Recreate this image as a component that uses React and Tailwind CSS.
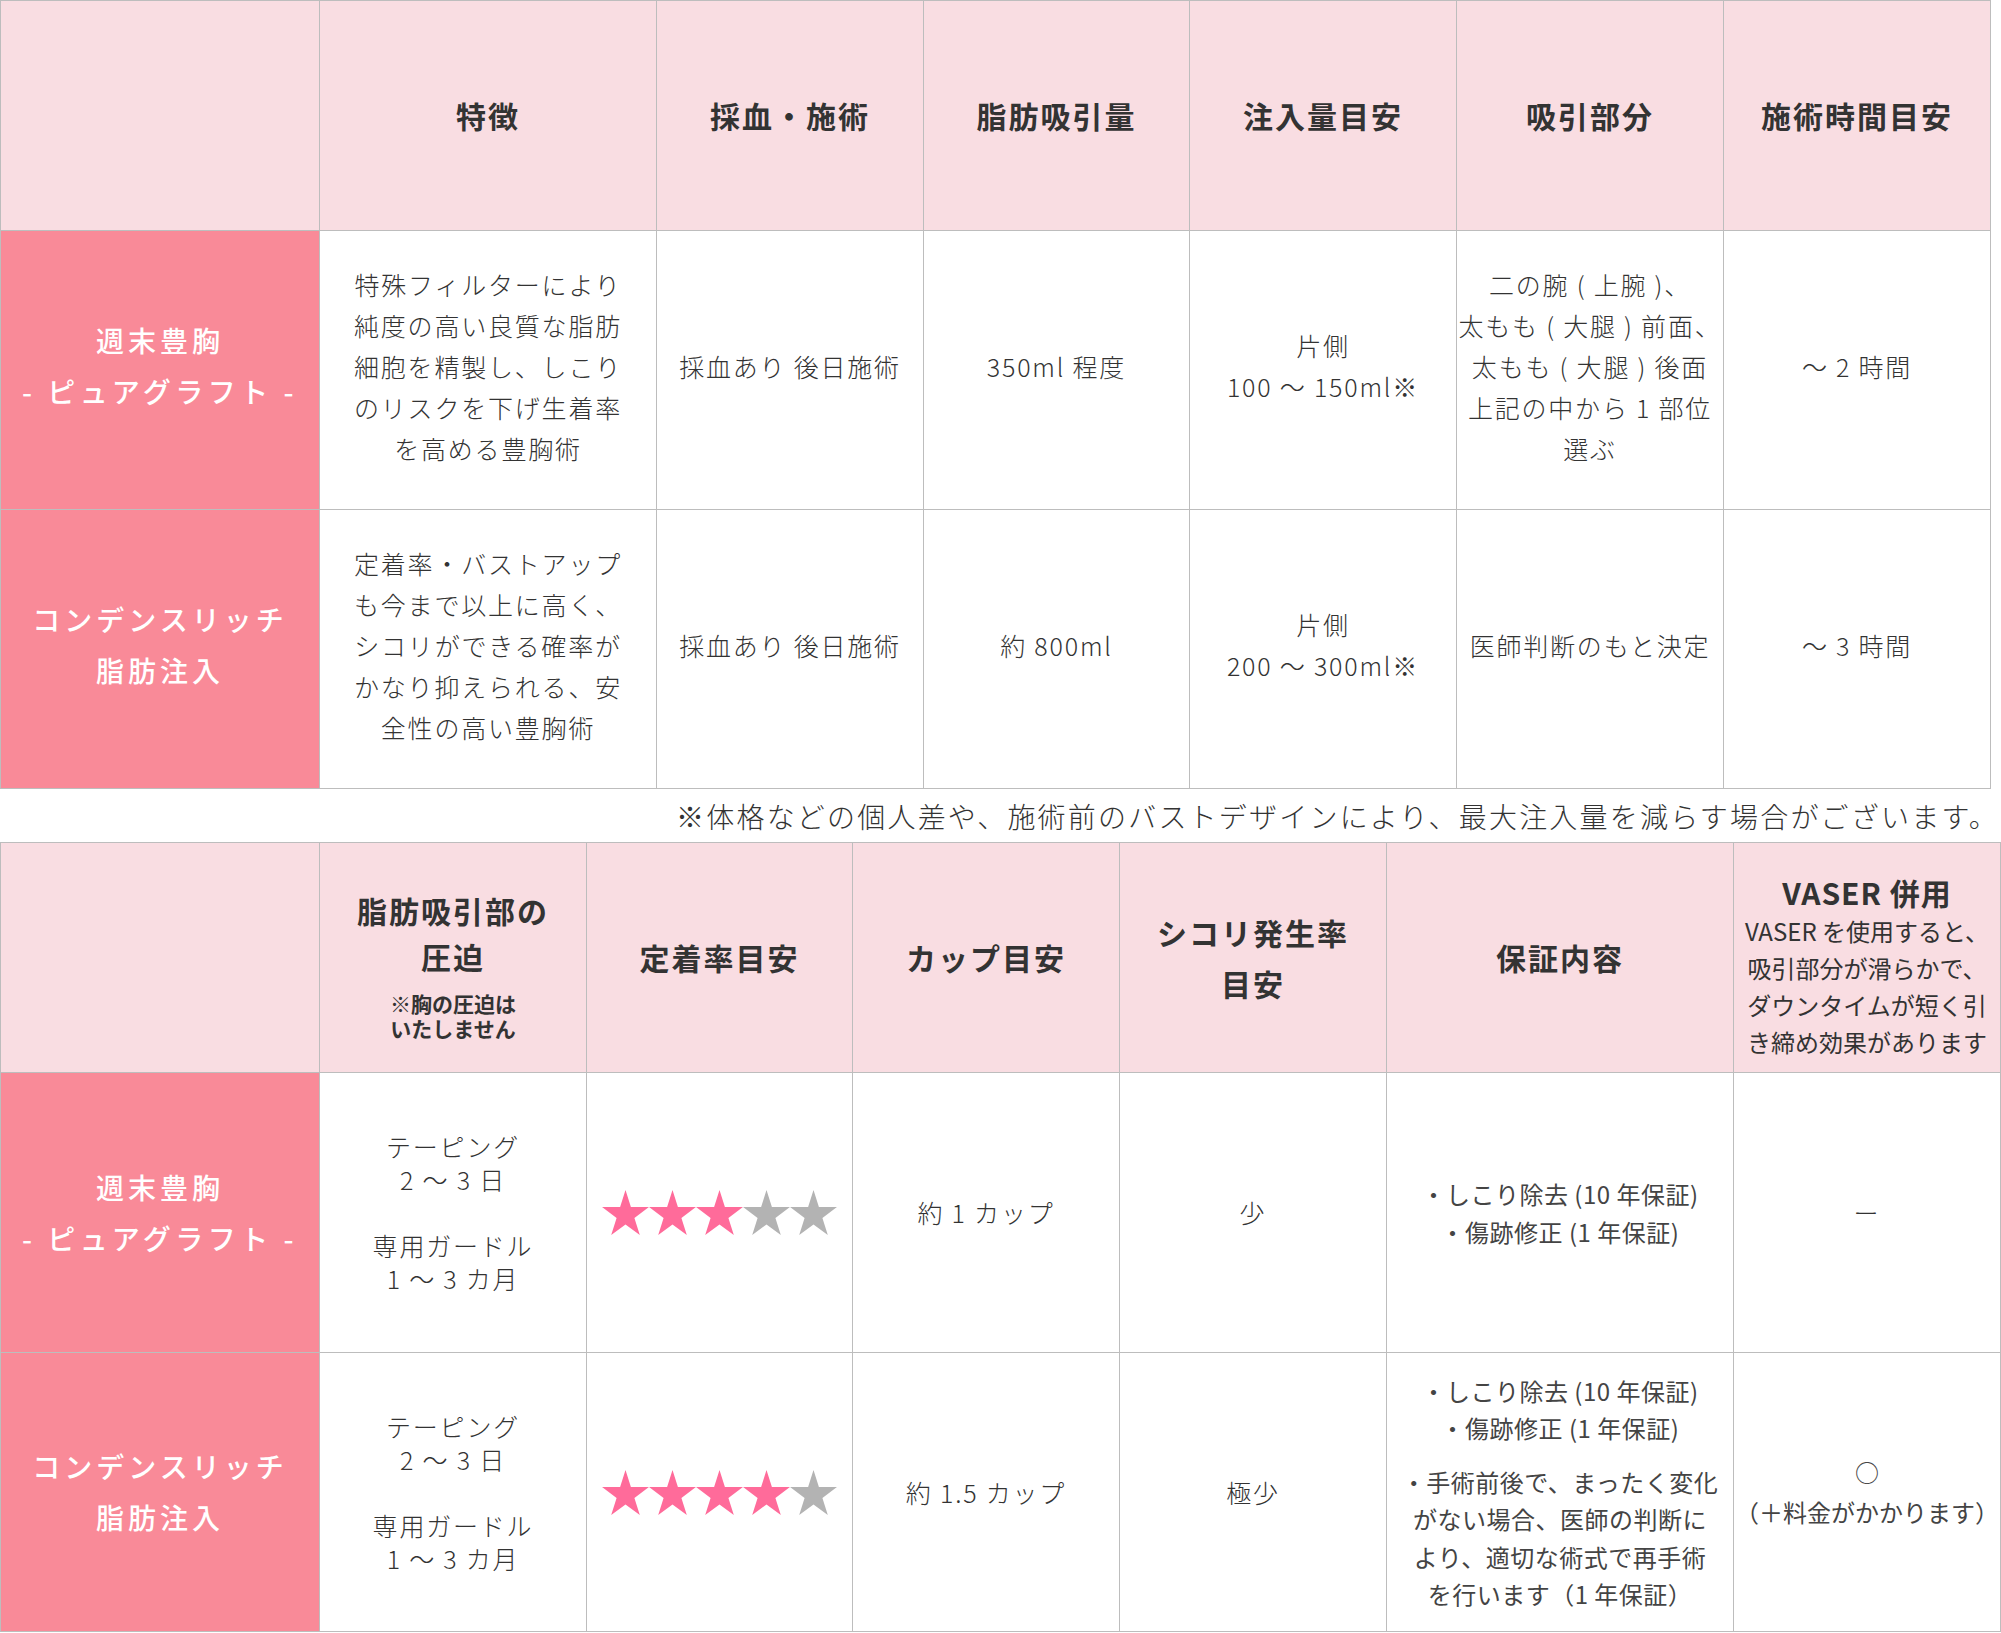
import React from 'react'

const font = "font-['Noto_Sans_CJK_JP','Noto_Sans',sans-serif]"

function Cell({ className = '', children }) {
  return (
    <div className={`flex flex-col items-center justify-center text-center ${className}`}>
      {children}
    </div>
  )
}

function Head({ children, className = '' }) {
  return (
    <Cell className={`bg-[#f9dde2] text-[30px] font-bold text-[#333] ${className}`}>
      {children}
    </Cell>
  )
}

function Label({ lines, className = '' }) {
  return (
    <Cell className={`bg-[#f98a98] text-[28px] font-medium text-white leading-[51px] ${className}`}>
      {lines.map((l, i) => (
        <div key={i} className={l.startsWith('-') ? 'tracking-[4.5px]' : 'tracking-[4px]'}>{l}</div>
      ))}
    </Cell>
  )
}

// body text: light weight, wide spacing
function Body({ lines, lh = 'leading-[41px]', className = '' }) {
  return (
    <Cell className={`bg-white text-[25px] font-light tracking-[1.8px] text-[#333] ${lh} ${className}`}>
      {lines.map((l, i) => (
        <div key={i} className="whitespace-pre">{l === '' ? '\u00a0' : l}</div>
      ))}
    </Cell>
  )
}

function Star({ on }) {
  return (
    <svg viewBox="0 0 100 96" className="h-[45px] w-[47px]">
      <polygon
        points="50,0 61.5,36.5 100,36.5 69,59.5 80.5,96 50,73.5 19.5,96 31,59.5 0,36.5 38.5,36.5"
        fill={on ? '#ff6b9a' : '#b3b3b3'}
      />
    </svg>
  )
}

function Stars({ count }) {
  return (
    <Cell className="bg-white">
      <div className="flex">
        {[0, 1, 2, 3, 4].map((i) => (
          <Star key={i} on={i < count} />
        ))}
      </div>
    </Cell>
  )
}

function Guarantee({ blocks }) {
  return (
    <Cell className="bg-white text-[24px] tracking-[0.5px] text-[#444] leading-[37.5px] gap-[16px]">
      {blocks.map((b, i) => (
        <div key={i}>
          {b.map((l, j) => (
            <div key={j} className="whitespace-pre">{l}</div>
          ))}
        </div>
      ))}
    </Cell>
  )
}

const taping = ['テーピング', '2 ～ 3 日', '', '専用ガードル', '1 ～ 3 カ月']

export default function App() {
  return (
    <div className={`w-[2001px] h-[1633px] bg-white ${font}`}>
      {/* 上段：施術内容 */}
      <div className="grid w-[1991px] grid-cols-[318px_336px_266px_265px_266px_266px_266px] grid-rows-[229px_278px_278px] gap-px border border-[#bdbdbd] bg-[#bdbdbd] tracking-[2px]">
        <Head />
        <Head>特徴</Head>
        <Head>採血・施術</Head>
        <Head>脂肪吸引量</Head>
        <Head>注入量目安</Head>
        <Head>吸引部分</Head>
        <Head>施術時間目安</Head>

        <Label lines={['週末豊胸', '- ピュアグラフト -']} className="pb-[8px]" />
        <Body className="pb-[8px]" lines={['特殊フィルターにより', '純度の高い良質な脂肪', '細胞を精製し、しこり', 'のリスクを下げ生着率', 'を高める豊胸術']} />
        <Body className="pb-[8px]" lines={['採血あり 後日施術']} />
        <Body className="pb-[8px]" lines={['350ml 程度']} />
        <Body className="pb-[8px]" lines={['片側', '100 ～ 150ml※']} />
        <Body className="pb-[8px]" lines={['二の腕 ( 上腕 )、', '太もも ( 大腿 ) 前面、', '太もも ( 大腿 ) 後面', '上記の中から 1 部位', '選ぶ']} />
        <Body className="pb-[8px]" lines={['～ 2 時間']} />

        <Label lines={['コンデンスリッチ', '脂肪注入']} className="pb-[8px]" />
        <Body className="pb-[8px]" lines={['定着率・バストアップ', 'も今まで以上に高く、', 'シコリができる確率が', 'かなり抑えられる、安', '全性の高い豊胸術']} />
        <Body className="pb-[8px]" lines={['採血あり 後日施術']} />
        <Body className="pb-[8px]" lines={['約 800ml']} />
        <Body className="pb-[8px]" lines={['片側', '200 ～ 300ml※']} />
        <Body className="pb-[8px]" lines={['医師判断のもと決定']} />
        <Body className="pb-[8px]" lines={['～ 3 時間']} />
      </div>

      {/* 注記 */}
      <div className="flex h-[53px] items-center justify-end whitespace-nowrap pr-[2px] text-[28px] font-light tracking-[2.2px] text-[#333]">
        ※体格などの個人差や、施術前のバストデザインにより、最大注入量を減らす場合がございます。
      </div>

      {/* 下段：術後・保証 */}
      <div className="grid w-[2001px] grid-cols-[318px_266px_265px_266px_266px_346px_266px] grid-rows-[229px_279px_278px] gap-px border border-[#bdbdbd] bg-[#bdbdbd] tracking-[2px]">
        <Head />
        <Head className="pt-[12px]">
          <div className="leading-[46px]">脂肪吸引部の</div>
          <div className="leading-[46px]">圧迫</div>
          <div className="mt-[12px] text-[21px] tracking-normal leading-[25px]">
            <div>※胸の圧迫は</div>
            <div>いたしません</div>
          </div>
        </Head>
        <Head>定着率目安</Head>
        <Head>カップ目安</Head>
        <Head className="leading-[51px]">
          <div>シコリ発生率</div>
          <div>目安</div>
        </Head>
        <Head>保証内容</Head>
        <Head className="pt-[16px]">
          <div className="leading-[40px] tracking-[1px]">VASER 併用</div>
          <div className="whitespace-nowrap text-[24px] font-normal leading-[37px] tracking-normal text-[#333]">
            <div>VASER を使用すると、</div>
            <div>吸引部分が滑らかで、</div>
            <div>ダウンタイムが短く引</div>
            <div>き締め効果があります</div>
          </div>
        </Head>

        <Label lines={['週末豊胸', '- ピュアグラフト -']} />
        <Body lines={taping} lh="leading-[33px]" />
        <Stars count={3} />
        <Body lines={['約 1 カップ']} />
        <Body lines={['少']} />
        <Guarantee blocks={[['・しこり除去 (10 年保証)', '・傷跡修正 (1 年保証)']]} />
        <Body lines={['ー']} />

        <Label lines={['コンデンスリッチ', '脂肪注入']} />
        <Body lines={taping} lh="leading-[33px]" />
        <Stars count={4} />
        <Body lines={['約 1.5 カップ']} />
        <Body lines={['極少']} />
        <Guarantee
          blocks={[
            ['・しこり除去 (10 年保証)', '・傷跡修正 (1 年保証)'],
            ['・手術前後で、まったく変化', 'がない場合、医師の判断に', 'より、適切な術式で再手術', 'を行います（1 年保証）'],
          ]}
        />
        <Cell className="bg-white text-[24px] leading-[40px] tracking-normal text-[#444]">
          <div>○</div>
          <div>（＋料金がかかります）</div>
        </Cell>
      </div>
    </div>
  )
}
